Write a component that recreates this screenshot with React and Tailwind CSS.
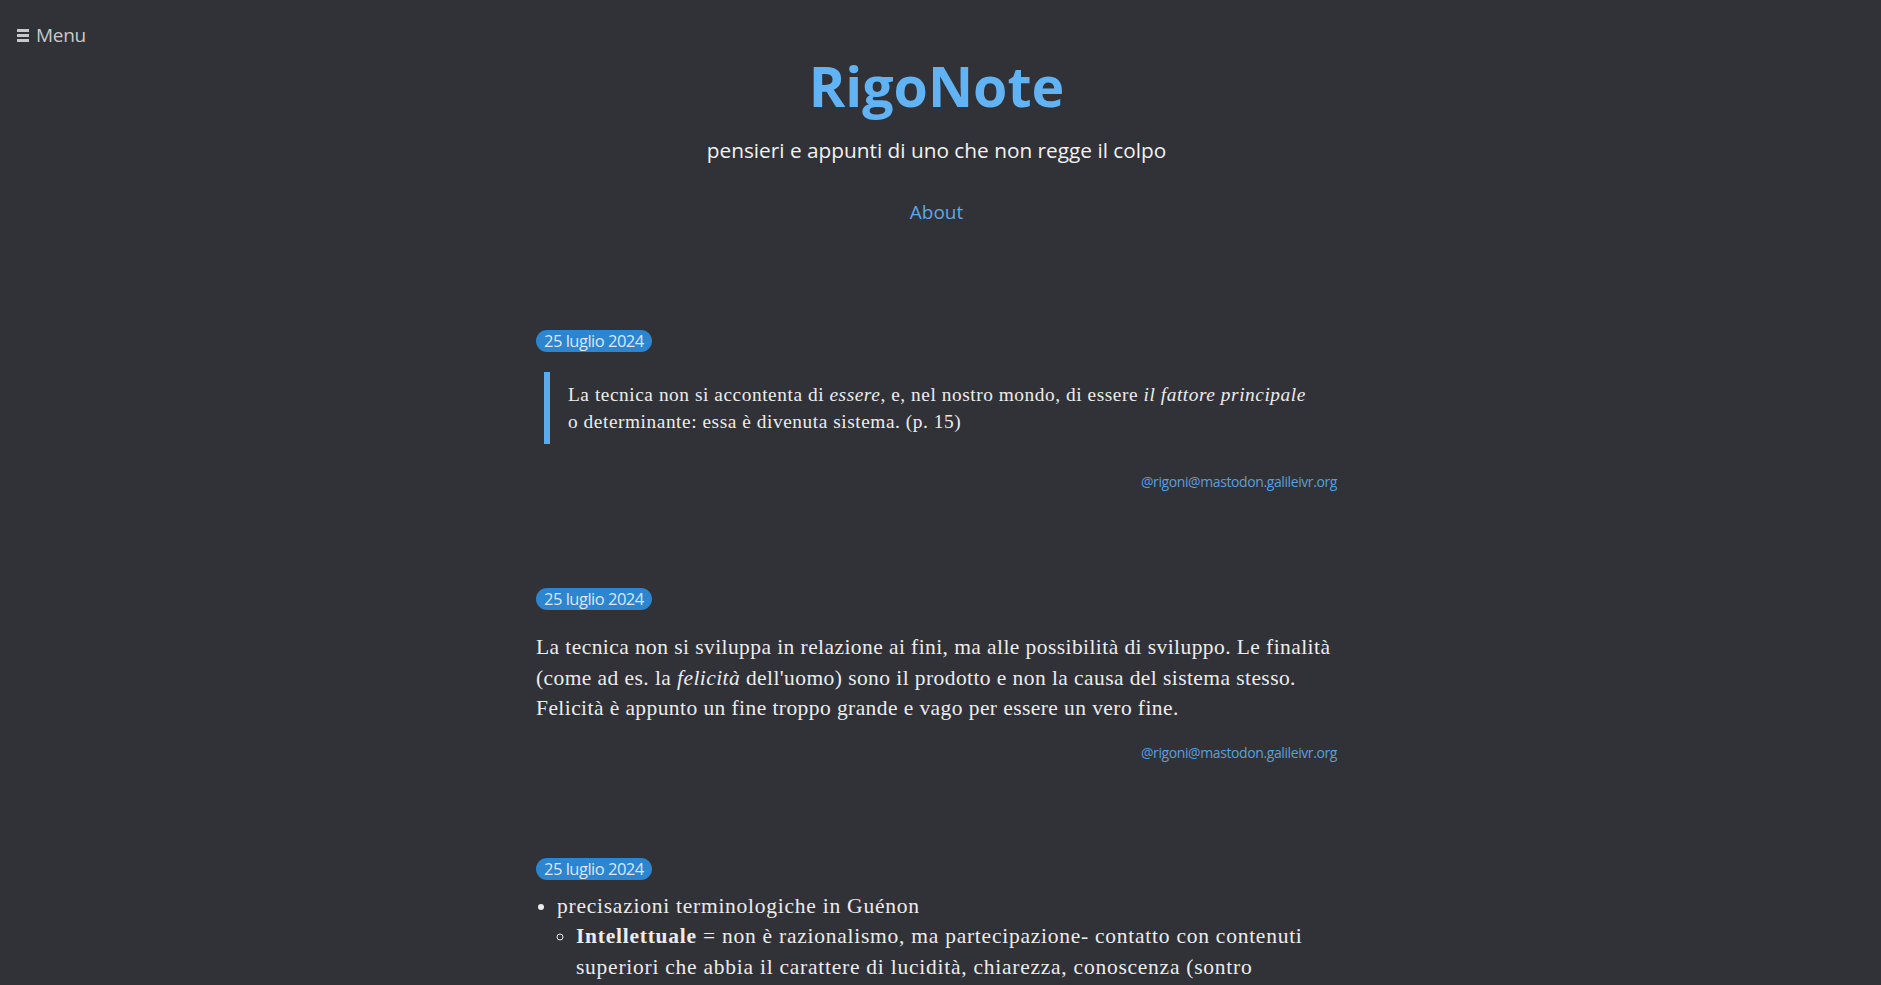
import React from "react";

const serif = { fontFamily: '"Liberation Serif", "DejaVu Serif", serif' };

function Badge({ children }) {
  return (
    <div className="flex">
      <span className="rounded-full bg-[#2d84cf] px-2 text-[16.5px] leading-[22px] tracking-[-0.5px] text-[#dbe7f3]">
        {children}
      </span>
    </div>
  );
}

function Author() {
  return (
    <div className="flex justify-end">
      <a className="text-[14px] leading-[20px] tracking-[-0.4px] text-[#5c9fd8]">@rigoni@mastodon.galileivr.org</a>
    </div>
  );
}

function MenuIcon() {
  return (
    <svg width="12" height="13" viewBox="0 0 12 13" className="block">
      <rect x="0" y="0" width="12" height="3" fill="currentColor" />
      <rect x="0" y="5" width="12" height="3" fill="currentColor" />
      <rect x="0" y="10" width="12" height="3" fill="currentColor" />
    </svg>
  );
}

export default function App() {
  return (
    <div
      className="min-h-screen bg-[#313238] pr-[8px] text-[#ececec]"
      style={{ fontFamily: '"Open Sans", "Noto Sans", sans-serif' }}
    >
      <div className="px-[17px] pt-[21px]">
        <button className="flex items-center gap-[7px] text-[19px] leading-[28px] tracking-[-0.3px] text-[#c7c8cc]">
          <MenuIcon />
          <span>Menu</span>
        </button>
      </div>

      <header className="flex flex-col items-center">
        <h1 className="mt-[3px] text-[55.5px] font-bold leading-[67px] text-[#62b3f4]">RigoNote</h1>
        <p className="mt-[17px] text-[20.8px] leading-[28px] text-[#f2f2f2]">
          pensieri e appunti di uno che non regge il colpo
        </p>
        <a className="mt-[35px] text-[19px] leading-[26px] text-[#5ea8e2]">About</a>
      </header>

      <main className="mx-auto w-[801px] pb-10">
        <article className="mt-[105px]">
          <Badge>25 luglio 2024</Badge>
          <blockquote
            className="ml-[8px] mr-[24px] mt-[20px] border-l-[6px] border-[#5aaaee] py-[9px] pl-[18px] text-[19.35px] leading-[27px] tracking-[0.55px] text-[#ececec]"
            style={serif}
          >
            La tecnica non si accontenta di <em>essere</em>, e, nel nostro mondo, di essere{" "}
            <em>il fattore principale</em> o determinante: essa è divenuta sistema. (p. 15)
          </blockquote>
          <div className="mt-[28px]">
            <Author />
          </div>
        </article>

        <article className="mt-[96px]">
          <Badge>25 luglio 2024</Badge>
          <p
            className="mt-[22px] text-[21.5px] leading-[30.6px] tracking-[0.42px] text-[#ececec]"
            style={serif}
          >
            La tecnica non si sviluppa in relazione ai fini, ma alle possibilità di sviluppo. Le finalità
            (come ad es. la <em>felicità</em> dell'uomo) sono il prodotto e non la causa del sistema stesso.
            Felicità è appunto un fine troppo grande e vago per essere un vero fine.
          </p>
          <div className="mt-[19px]">
            <Author />
          </div>
        </article>

        <article className="mt-[95px]">
          <Badge>25 luglio 2024</Badge>
          <ul
            className="mt-[11px] list-disc pl-[21px] text-[21.5px] leading-[30.6px] tracking-[0.75px] text-[#ececec]"
            style={serif}
          >
            <li>
              precisazioni terminologiche in Guénon
              <ul className="list-[circle] pl-[19px]">
                <li>
                  <strong>Intellettuale</strong> = non è razionalismo, ma partecipazione- contatto con contenuti
                  superiori che abbia il carattere di lucidità, chiarezza, conoscenza (sontro l'emotività e il
                  sentimentalismo)
                </li>
              </ul>
            </li>
          </ul>
        </article>
      </main>
    </div>
  );
}
